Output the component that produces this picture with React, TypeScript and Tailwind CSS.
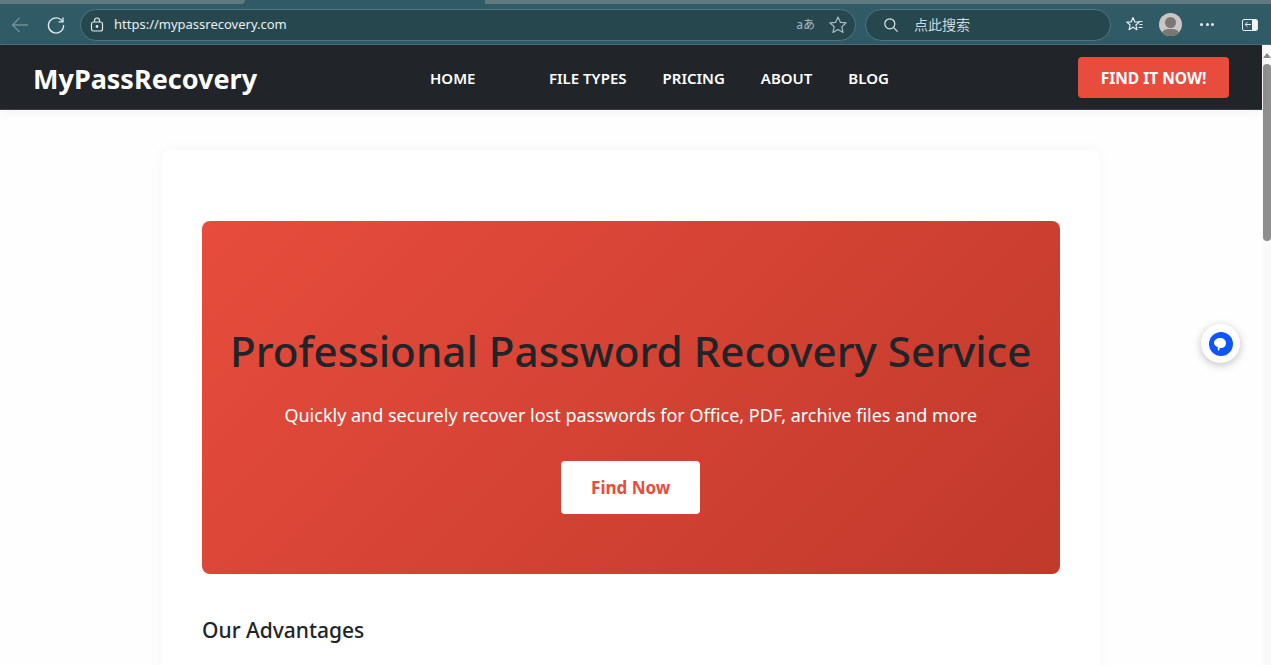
import React from "react";

const font = { fontFamily: '"Noto Sans", "Open Sans", "Noto Sans CJK SC", sans-serif' };

function ToolbarIcons() {
  return (
    <div className="flex items-center">
      <svg width="20" height="20" viewBox="0 0 20 20" fill="none" stroke="#e6ecee" strokeWidth="1.200" strokeLinejoin="round" className="ml-[14px]">
        <path d="M8 2.500l1.800 4.300 4.400.3-3.300 2.900 1 4.700L8 12.200l-3.900 2.500 1-4.700L1.800 7.100l4.400-.3z" />
        <path d="M13.500 6.500h4M14.500 9.500h3M13.500 12.500h4" />
      </svg>
      <div className="ml-[14px] w-[23px] h-[23px] rounded-full bg-[#c9c6c3] overflow-hidden relative">
        <div className="absolute left-[6px] top-[4px] w-[11px] h-[11px] rounded-full bg-[#7b7775]" />
        <div className="absolute left-[2px] top-[16px] w-[19px] h-[14px] rounded-full bg-[#7b7775]" />
      </div>
      <div className="ml-[18px] flex gap-[2.500px]">
        <span className="w-[3px] h-[3px] rounded-full bg-[#e6ecee]" />
        <span className="w-[3px] h-[3px] rounded-full bg-[#e6ecee]" />
        <span className="w-[3px] h-[3px] rounded-full bg-[#e6ecee]" />
      </div>
      <div className="ml-[28px] w-[16px] h-[12px] rounded-[2px] border border-[#e6ecee] flex overflow-hidden">
        <div className="w-[9px] flex items-center justify-center">
          <svg width="8" height="7" viewBox="0 0 8 7" fill="none" stroke="#e6ecee" strokeWidth="1">
            <path d="M7 3.500H1.500M3.500 1.200L1.200 3.500l2.300 2.300" />
          </svg>
        </div>
        <div className="flex-1 bg-[#f2f5f6]" />
      </div>
    </div>
  );
}

function BrowserChrome() {
  return (
    <div className="h-[45px] bg-[#2f5a66] shrink-0 border-b border-[#4a6f7a]">
      <div className="h-[4px] flex">
        <div className="w-[245px] bg-[#60797e] rounded-br-[4px]" />
        <div className="flex-1" />
        <div className="w-[786px] bg-[#60797e]" />
      </div>
      <div className="h-[40px] flex items-center pt-[1px]">
        <svg width="20" height="20" viewBox="0 0 20 20" fill="none" stroke="#73909a" strokeWidth="1.300" className="ml-[10px]">
          <path d="M18 10H2.500M9.500 3l-7 7 7 7" />
        </svg>
        <svg width="20" height="20" viewBox="0 0 20 20" fill="none" stroke="#e6ecee" strokeWidth="1.300" className="ml-[16px]">
          <path d="M16.600 6.600A7.600 7.600 0 1 0 17.600 10" />
          <path d="M17 2.500v4.400h-4.400" />
        </svg>
        <div className="ml-[14px] w-[776px] h-[32px] rounded-full bg-[#27474f] border border-[#507480] flex items-center">
          <svg width="14" height="15" viewBox="0 0 14 15" fill="none" stroke="#dfe7e9" strokeWidth="1.200" className="ml-[9px]">
            <rect x="1.500" y="5" width="11" height="9" rx="2" />
            <path d="M4.500 5V3.500a2.500 2.500 0 0 1 5 0V5" />
            <circle cx="7" cy="9.500" r="0.800" fill="#dfe7e9" />
          </svg>
          <span className="ml-[10px] text-[13px] text-[#e8eef0] leading-none">https://mypassrecovery.com</span>
          <span className="ml-auto text-[12px] text-[#a9bac0] leading-none">aあ</span>
          <svg width="20" height="20" viewBox="0 0 20 20" fill="none" stroke="#a9bac0" strokeWidth="1.200" strokeLinejoin="round" className="ml-[13px] mr-[7px]">
            <path d="M10 2l2.400 5.300 5.700.6-4.300 3.800 1.200 5.700L10 14.500l-5 2.900 1.200-5.700L1.900 7.900l5.700-.6z" />
          </svg>
        </div>
        <div className="ml-[9px] w-[246px] h-[32px] rounded-full bg-[#27474f] border border-[#507480] flex items-center">
          <svg width="16" height="16" viewBox="0 0 16 16" fill="none" stroke="#dfe7e9" strokeWidth="1.200" className="ml-[17px]">
            <circle cx="6.800" cy="6.800" r="5" />
            <path d="M10.400 10.400l4.200 4.200" />
          </svg>
          <span className="ml-[15px] text-[14px] text-[#cfdadd] leading-none">点此搜索</span>
        </div>
        <ToolbarIcons />
      </div>
    </div>
  );
}

function Nav() {
  return (
    <header className="h-[65px] bg-[#212529] flex items-center border-b border-[#3a3e43] shadow-[0_2px_10px_rgba(0,0,0,0.05)] relative z-10">
      <div className="ml-[33px] w-[397px] text-[27px] font-bold text-white leading-none pt-[3px]">MyPassRecovery</div>
      <nav className="flex items-center text-[15px] font-semibold text-white pt-[3px]">
        <a className="w-[119px]">HOME</a>
        <a className="mr-[36px]">FILE TYPES</a>
        <a className="mr-[36px]">PRICING</a>
        <a className="mr-[36px]">ABOUT</a>
        <a>BLOG</a>
      </nav>
      <button className="ml-auto mr-[33px] w-[151px] h-[41px] rounded-[4px] bg-[#e74c3c] text-white text-[15.500px] font-bold pt-[4px]">
        FIND IT NOW!
      </button>
    </header>
  );
}

export default function App() {
  return (
    <div className="h-[665px] w-[1271px] overflow-hidden flex flex-col bg-white" style={font}>
      <BrowserChrome />
      <div className="flex flex-1 min-h-0">
        <div className="flex-1 min-w-0 relative bg-[#fefefe]">
          <Nav />
          <main className="mt-[40px] ml-[162px] w-[937.500px] rounded-[8px] bg-white shadow-[0_0_15px_rgba(0,0,0,0.04)] px-[40px] pt-[71px] pb-[40px]">
            <section className="h-[353px] rounded-[8px] bg-[linear-gradient(135deg,#e74c3c,#c0392b)] flex flex-col items-center pt-[100px]">
              <h1 className="text-[42.200px] font-medium text-[#212529] leading-[60px] whitespace-nowrap">
                Professional Password Recovery Service
              </h1>
              <p className="mt-[20px] text-[18px] text-white leading-[28px]">
                Quickly and securely recover lost passwords for Office, PDF, archive files and more
              </p>
              <button className="mt-[32px] w-[139px] h-[53px] rounded-[4px] bg-white text-[#e74c3c] text-[17px] font-bold">
                Find Now
              </button>
            </section>
            <h2 className="mt-[41px] text-[21px] font-medium text-[#212529] leading-[30px]">Our Advantages</h2>
          </main>
          <div className="absolute left-[1201px] top-[279px] w-[39px] h-[39px] rounded-full bg-white shadow-[0_2px_8px_rgba(0,0,0,0.25)] flex items-center justify-center">
            <svg width="24" height="24" viewBox="0 0 24 24">
              <circle cx="12" cy="12" r="12" fill="#0f55fa" />
              <path d="M5 10.500C5.300 7.800 8 6 11 6c3.300 0 6 2 6 5s-2.300 5-5 5c-1 0-1.500.4-1.700 1.500l-.3 1.500c-1.300-.8-1.500-2.200-1-3.500-.4-.9-4.300-1.400-4-5.500z" fill="white" />
            </svg>
          </div>
        </div>
        <aside className="w-[9px] bg-[#f9f9f9] shrink-0 relative">
          <div className="absolute left-[1px] top-[8px] w-0 h-0 border-x-[4px] border-x-transparent border-b-[5px] border-b-[#8b8b8b]" />
          <div className="absolute left-[1px] top-[19px] w-[8px] h-[177px] rounded-[4px] bg-[#8f8f8f]" />
        </aside>
      </div>
    </div>
  );
}
